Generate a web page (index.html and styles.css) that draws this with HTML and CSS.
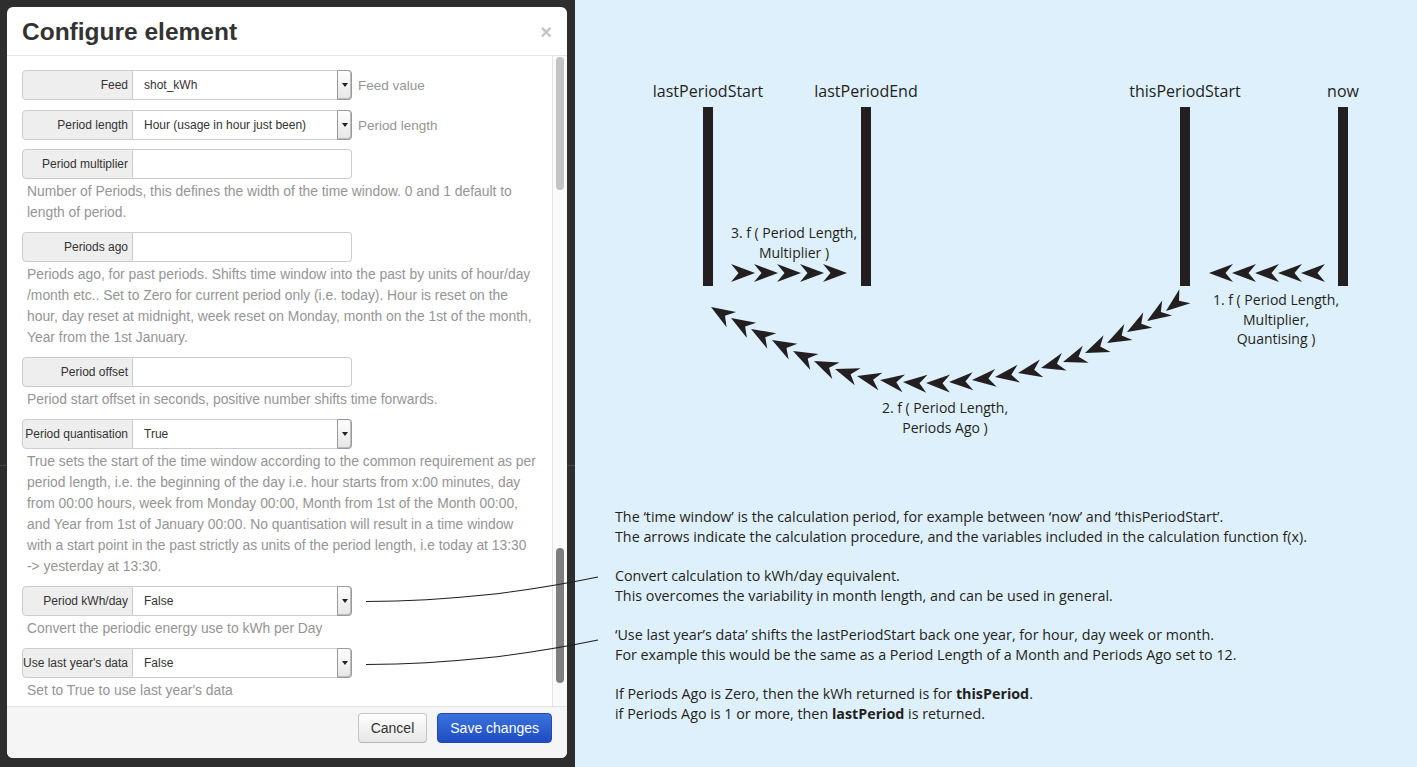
FILE: index.html
```html
<!DOCTYPE html>
<html>
<head>
<meta charset="utf-8">
<title>Configure element</title>
<link rel="stylesheet" href="styles.css">
</head>
<body>
<div class="page">
  <div class="backdrop">
    <div class="modal">
      <div class="modal-header">
        <h3>Configure element</h3>
        <span class="close">×</span>
      </div>
      <div class="modal-body">
        <div class="modal-content">
          <div class="group group-first">
            <div class="prepend"><span class="addon">Feed</span><div class="field"><span class="val">shot_kWh</span><span class="caret-box"><i class="caret"></i></span></div></div>
            <span class="help-inline">Feed value</span>
          </div>
          <div class="group">
            <div class="prepend"><span class="addon">Period length</span><div class="field"><span class="val">Hour (usage in hour just been)</span><span class="caret-box"><i class="caret"></i></span></div></div>
            <span class="help-inline">Period length</span>
          </div>
          <div class="group group-block">
            <div class="prepend"><span class="addon">Period multiplier</span><div class="field"></div></div>
            <p class="help-block">Number of Periods, this defines the width of the time window. 0 and 1 default to<br>length of period.</p>
          </div>
          <div class="group group-block">
            <div class="prepend"><span class="addon">Periods ago</span><div class="field"></div></div>
            <p class="help-block">Periods ago, for past periods. Shifts time window into the past by units of hour/day<br>/month etc.. Set to Zero for current period only (i.e. today). Hour is reset on the<br>hour, day reset at midnight, week reset on Monday, month on the 1st of the month,<br>Year from the 1st January.</p>
          </div>
          <div class="group group-block">
            <div class="prepend"><span class="addon">Period offset</span><div class="field"></div></div>
            <p class="help-block">Period start offset in seconds, positive number shifts time forwards.</p>
          </div>
          <div class="group group-block">
            <div class="prepend"><span class="addon">Period quantisation</span><div class="field"><span class="val">True</span><span class="caret-box"><i class="caret"></i></span></div></div>
            <p class="help-block">True sets the start of the time window according to the common requirement as per<br>period length, i.e. the beginning of the day i.e. hour starts from x:00 minutes, day<br>from 00:00 hours, week from Monday 00:00, Month from 1st of the Month 00:00,<br>and Year from 1st of January 00:00. No quantisation will result in a time window<br>with a start point in the past strictly as units of the period length, i.e today at 13:30<br>-&gt; yesterday at 13:30.</p>
          </div>
          <div class="group group-block">
            <div class="prepend"><span class="addon">Period kWh/day</span><div class="field"><span class="val">False</span><span class="caret-box"><i class="caret"></i></span></div></div>
            <p class="help-block">Convert the periodic energy use to kWh per Day</p>
          </div>
          <div class="group group-block">
            <div class="prepend"><span class="addon">Use last year's data</span><div class="field"><span class="val">False</span><span class="caret-box"><i class="caret"></i></span></div></div>
            <p class="help-block">Set to True to use last year's data</p>
          </div>
        </div>
        <div class="track"><div class="thumb thumb-a"></div><div class="thumb thumb-b"></div></div>
      </div>
      <div class="modal-footer">
        <button class="btn">Cancel</button>
        <button class="btn btn-primary">Save changes</button>
      </div>
    </div>
  </div>

  <div class="canvas">
    <svg class="diagram" width="842" height="507" viewBox="575 0 842 507" xmlns="http://www.w3.org/2000/svg">
      <defs>
        <path id="ar" d="M0,0 L-24,-9 L-16.5,0 L-24,9 Z"/>
        <path id="al" d="M0,0 L24,-9 L16.5,0 L24,9 Z"/>
      </defs>
      <g class="ink">
        <rect x="703" y="107" width="10" height="179"/>
        <rect x="861" y="107" width="10" height="179"/>
        <rect x="1180" y="107" width="10" height="179"/>
        <rect x="1338" y="107" width="10" height="179"/>

        <use href="#ar" x="755" y="273"/>
        <use href="#ar" x="778" y="273"/>
        <use href="#ar" x="801" y="273"/>
        <use href="#ar" x="824" y="273"/>
        <use href="#ar" x="847" y="273"/>

        <use href="#al" x="1209" y="273"/>
        <use href="#al" x="1232" y="273"/>
        <use href="#al" x="1255" y="273"/>
        <use href="#al" x="1278" y="273"/>
        <use href="#al" x="1301" y="273"/>

        <use href="#al" transform="translate(1166 311) rotate(-38)"/>
        <use href="#al" transform="translate(1147 321) rotate(-33)"/>
        <use href="#al" transform="translate(1127 332) rotate(-30)"/>
        <use href="#al" transform="translate(1107 343) rotate(-27)"/>
        <use href="#al" transform="translate(1085 353) rotate(-23)"/>
        <use href="#al" transform="translate(1063 362) rotate(-19)"/>
        <use href="#al" transform="translate(1041 368) rotate(-15)"/>
        <use href="#al" transform="translate(1018 373) rotate(-11)"/>
        <use href="#al" transform="translate(995 377) rotate(-8)"/>
        <use href="#al" transform="translate(972 380) rotate(-5)"/>
        <use href="#al" transform="translate(949 382) rotate(-2)"/>
        <use href="#al" transform="translate(926 383) rotate(1)"/>
        <use href="#al" transform="translate(903 382) rotate(4)"/>
        <use href="#al" transform="translate(880 380) rotate(8)"/>
        <use href="#al" transform="translate(857 376) rotate(13)"/>
        <use href="#al" transform="translate(835 369) rotate(19)"/>
        <use href="#al" transform="translate(814 361) rotate(24)"/>
        <use href="#al" transform="translate(793 351) rotate(27)"/>
        <use href="#al" transform="translate(772 340) rotate(29)"/>
        <use href="#al" transform="translate(751 329) rotate(30)"/>
        <use href="#al" transform="translate(731 318) rotate(31)"/>
        <use href="#al" transform="translate(711 307) rotate(32)"/>
      </g>
      <g class="labels">
        <text x="708" y="97">lastPeriodStart</text>
        <text x="866" y="97">lastPeriodEnd</text>
        <text x="1185" y="97">thisPeriodStart</text>
        <text x="1343" y="97">now</text>
      </g>
      <g class="fn">
        <text x="794" y="238">3. f ( Period Length,</text>
        <text x="794" y="258">Multiplier )</text>
        <text x="1276" y="305">1. f ( Period Length,</text>
        <text x="1276" y="325">Multiplier,</text>
        <text x="1276" y="344">Quantising )</text>
        <text x="945" y="413">2. f ( Period Length,</text>
        <text x="945" y="433">Periods Ago )</text>
      </g>
    </svg>
    <div class="notes">
      <p>The ‘time window’ is the calculation period, for example between ‘now’ and ‘thisPeriodStart’.<br>The arrows indicate the calculation procedure, and the variables included in the calculation function f(x).</p>
      <p>Convert calculation to kWh/day equivalent.<br>This overcomes the variability in month length, and can be used in general.</p>
      <p>‘Use last year’s data’ shifts the lastPeriodStart back one year, for hour, day week or month.<br>For example this would be the same as a Period Length of a Month and Periods Ago set to 12.</p>
      <p>If Periods Ago is Zero, then the kWh returned is for <b>thisPeriod</b>.<br>if Periods Ago is 1 or more, then <b>lastPeriod</b> is returned.</p>
    </div>
  </div>

  <svg class="connectors" width="1417" height="767" viewBox="0 0 1417 767" xmlns="http://www.w3.org/2000/svg">
    <path d="M366,601.5 C450,601 520,593 598,577"/>
    <path d="M366,664.5 C450,664 520,656 598,640"/>
  </svg>
</div>
</body>
</html>
```
FILE: styles.css
```css
html, body {
  margin: 0;
  padding: 0;
}
body {
  width: 1417px;
  height: 767px;
  overflow: hidden;
  font-family: "Liberation Sans", Arial, sans-serif;
}
.page {
  position: relative;
  display: flex;
  width: 1417px;
  height: 767px;
}

/* dark backdrop with the modal */
.backdrop {
  flex: none;
  width: 575px;
  height: 767px;
  box-sizing: border-box;
  padding: 7px 8px 9px 7px;
  background-color: #2e2e2e;
  background-image: linear-gradient(to bottom, transparent 465px, #474747 465px, #474747 466px, transparent 466px);
}
.modal {
  width: 560px;
  height: 751px;
  background: #fff;
  border-radius: 6px;
  display: flex;
  flex-direction: column;
  overflow: hidden;
}
.modal-header {
  flex: none;
  height: 49px;
  box-sizing: border-box;
  border-bottom: 1px solid #e5e5e5;
  padding: 10px 15px 8px 15px;
  display: flex;
  justify-content: space-between;
  align-items: center;
}
.modal-header h3 {
  margin: 0;
  font-weight: bold;
  font-size: 24.5px;
  line-height: 30px;
  color: #333;
}
.close {
  font-weight: bold;
  font-size: 20px;
  line-height: 20px;
  color: #c4c4c4;
  margin-right: 0;
}
.modal-body {
  flex: none;
  height: 650px;
  display: flex;
}
.modal-content {
  flex: 1;
  min-width: 0;
  overflow: hidden;
  padding: 14px 15px 0 15px;
}
.track {
  flex: none;
  width: 15px;
  box-sizing: border-box;
  border-left: 1px solid #e4e4e4;
  background: #fafafa;
  position: relative;
}
.thumb {
  position: absolute;
  left: 3px;
  width: 8px;
  border-radius: 4px;
}
.thumb-a {
  top: 1px;
  height: 133px;
  background: #c3c3c3;
}
.thumb-b {
  top: 492px;
  height: 135px;
  background: #7e7e7e;
}

/* form rows */
.group {
  margin-bottom: 9px;
  display: flex;
  align-items: center;
}
.group-first {
  margin-bottom: 10px;
}
.group-block {
  display: block;
}
.prepend {
  display: flex;
  width: 330px;
  height: 30px;
}
.addon {
  flex: none;
  width: 111px;
  box-sizing: border-box;
  background: #eee;
  border: 1px solid #ccc;
  border-radius: 4px 0 0 4px;
  text-align: right;
  padding-right: 4px;
  font-size: 12px;
  line-height: 28px;
  color: #333;
  white-space: nowrap;
  overflow: hidden;
}
.field {
  flex: 1;
  display: flex;
  align-items: center;
  border: 1px solid #ccc;
  border-left: none;
  border-radius: 0 4px 4px 0;
  background: #fff;
}
.val {
  flex: 1;
  padding-left: 11px;
  font-size: 12px;
  color: #333;
  white-space: nowrap;
}
.caret-box {
  align-self: stretch;
  width: 13px;
  margin: -1px -1px -1px 0;
  border: 1px solid #9a9a9a;
  border-radius: 0 4px 4px 0;
  background: linear-gradient(to bottom, #fefefe, #e6e6e6);
  box-shadow: inset -1px -1px 0 #bdbdbd;
  display: flex;
  align-items: center;
  justify-content: center;
}
.caret {
  width: 0;
  height: 0;
  border-left: 3px solid transparent;
  border-right: 3px solid transparent;
  border-top: 4px solid #222;
}
.help-inline {
  margin-left: 6px;
  font-size: 13.5px;
  color: #959595;
}
.help-block {
  margin: 2px 0 0 0;
  padding-left: 5px;
  font-size: 13.85px;
  line-height: 21px;
  color: #959595;
  white-space: nowrap;
}

/* footer */
.modal-footer {
  flex: 1;
  box-sizing: border-box;
  background: #f5f5f5;
  border-top: 1px solid #e3e3e3;
  padding: 6px 15px 0 15px;
  display: flex;
  justify-content: flex-end;
  align-items: flex-start;
  gap: 10px;
}
.btn {
  height: 30px;
  box-sizing: border-box;
  padding: 0 12px;
  font-family: "Liberation Sans", Arial, sans-serif;
  font-size: 14px;
  line-height: 28px;
  color: #333;
  background: linear-gradient(to bottom, #ffffff, #e6e6e6);
  border: 1px solid #c6c6c6;
  border-bottom-color: #b3b3b3;
  border-radius: 4px;
}
.btn-primary {
  color: #fff;
  background: linear-gradient(to bottom, #3a73dc, #1f4cc2);
  border-color: #2447b0;
}

/* right canvas */
.canvas {
  flex: 1;
  background: #dff0fd;
}
.diagram {
  display: block;
}
.ink {
  fill: #231f20;
}
.labels text {
  font-family: "Open Sans", "Noto Sans", sans-serif;
  font-size: 16px;
  fill: #231f20;
  text-anchor: middle;
}
.fn text {
  font-family: "Open Sans", "Noto Sans", sans-serif;
  font-size: 14px;
  fill: #231f20;
  text-anchor: middle;
}
.notes {
  padding-left: 40px;
  font-family: "Open Sans", "Noto Sans", sans-serif;
  font-size: 14.3px;
  line-height: 19.7px;
  color: #231f20;
  white-space: nowrap;
}
.notes p {
  margin: 0 0 19.7px 0;
}
.notes b {
  font-weight: bold;
}
.connectors {
  position: absolute;
  left: 0;
  top: 0;
  pointer-events: none;
}
.connectors path {
  fill: none;
  stroke: #1e1e1e;
  stroke-width: 1.1;
}
```
